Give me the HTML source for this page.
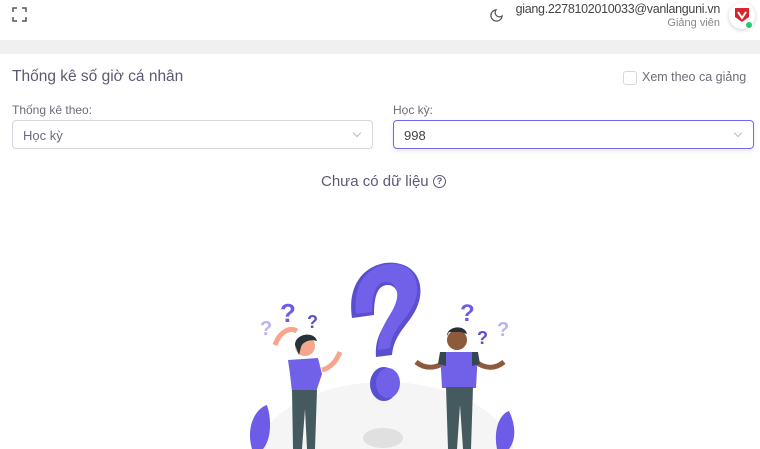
<!DOCTYPE html>
<html style="overflow:hidden;height:449px"><head><meta charset="utf-8"><style>
*{box-sizing:border-box;margin:0;padding:0}
body{width:760px;height:449px;overflow:hidden;background:#fff;font-family:"Liberation Sans",sans-serif;color:#5e5873;position:relative}
.hdr{position:absolute;left:0;top:0;width:760px;height:40px;background:#fff;box-shadow:0 2px 6px rgba(0,0,0,.06)}
.band{position:absolute;left:0;top:40px;width:760px;height:14px;background:#f0f0f0}
.abs{position:absolute;white-space:nowrap}
.sel{position:absolute;height:29px;border:1px solid #d8d6de;border-radius:4px;font-size:13px;color:#6e6b7b;padding:7px 10px}
.sel .ch{position:absolute;right:12px;top:9px;width:6px;height:6px;border-right:1px solid #bbb;border-bottom:1px solid #bbb;transform:rotate(45deg)}
</style></head><body>
<div class="hdr"></div>
<div class="band"></div>
<svg class="abs" style="left:12px;top:7px" width="15" height="15" viewBox="0 0 15 15" fill="none" stroke="#555" stroke-width="1.5"><path d="M1 5V1h4M10 1h4v4M14 10v4h-4M5 14H1v-4"/></svg>
<svg class="abs" style="left:489px;top:8px" width="15" height="15" viewBox="0 0 24 24" fill="none" stroke="#555" stroke-width="2"><path d="M21 12.8A9 9 0 1 1 11.2 3a7 7 0 0 0 9.8 9.8z"/></svg>
<div class="abs" style="right:40px;top:2px;font-size:12.5px;letter-spacing:-0.3px;color:#444">giang.2278102010033@vanlanguni.vn</div>
<div class="abs" style="right:40px;top:17px;font-size:11px;color:#888">Giảng viên</div>
<div class="abs" style="left:729px;top:3px;width:26px;height:26px;border-radius:50%;background:#fff;box-shadow:0 1px 4px rgba(0,0,0,.2)"></div>
<svg class="abs" style="left:734px;top:7px" width="16" height="16" viewBox="0 0 16 16"><path d="M1 1h14v9l-7 5-7-5z" fill="#d7262b"/><path d="M4 5l4 6 4-6" stroke="#fff" stroke-width="2" fill="none"/></svg>
<div class="abs" style="left:745px;top:21px;width:8px;height:8px;border-radius:50%;background:#28c76f;border:1px solid #fff"></div>

<div class="abs" style="left:12px;top:68px;font-size:15.5px;color:#5e5873">Thống kê số giờ cá nhân</div>
<div class="abs" style="left:623px;top:71px;width:14px;height:14px;border:1px solid #d8d6de;border-radius:3px"></div>
<div class="abs" style="left:642px;top:70px;font-size:12.5px;color:#6e6b7b">Xem theo ca giảng</div>
<div class="abs" style="left:12px;top:103px;font-size:12px;color:#6e6b7b">Thống kê theo:</div>
<div class="abs" style="left:393px;top:103px;font-size:12px;color:#6e6b7b">Học kỳ:</div>
<div class="sel" style="left:12px;top:120px;width:361px">Học kỳ<span class="ch"></span></div>
<div class="sel" style="left:393px;top:120px;width:361px;border-color:#7367f0;color:#444;box-shadow:0 2px 4px rgba(115,103,240,.15)">998<span class="ch"></span></div>
<div class="abs" style="left:321px;top:173px;font-size:15px;color:#5e5873">Chưa có dữ liệu</div>
<div class="abs" style="left:433px;top:175px;width:13px;height:13px;border:1.3px solid #5e5873;border-radius:50%;font-size:9px;text-align:center;line-height:11px;font-weight:bold">?</div>

<svg class="abs" style="left:0;top:0" width="760" height="449">
<ellipse cx="385" cy="460" rx="130" ry="78" fill="#f5f5f5"/>
<ellipse cx="383" cy="438" rx="20" ry="10" fill="#e0e0e0"/>
<path d="M252 449c-6-20 2-40 15-44 5 15 4 35-4 44z" fill="#6c5ce7"/>
<path d="M497 449c-4-20 3-35 12-38 6 12 8 28 0 38z" fill="#6c5ce7"/>
<path d="M352 318c-6-40 20-58 44-55 26 4 30 30 18 50-8 14-20 22-22 42l-16 2c-2-26 14-36 20-50 5-12 0-22-8-22-10 0-14 10-14 30z" fill="#5a4fd0"/>
<path d="M356 314c-4-36 18-52 40-50 22 3 26 26 16 44-8 14-20 22-22 40l-12 2c0-24 14-34 18-48 4-12-2-20-10-20-10 0-14 12-14 30z" fill="#7160e8"/>
<ellipse cx="384" cy="384" rx="14" ry="17" fill="#5a4fd0"/>
<ellipse cx="388" cy="383" rx="12" ry="15" fill="#7160e8"/>
<text x="280" y="322" font-size="26" font-weight="bold" fill="#6c5ce7" font-family="Liberation Sans">?</text>
<text x="307" y="328" font-size="18" font-weight="bold" fill="#5a4fd0" font-family="Liberation Sans">?</text>
<text x="260" y="335" font-size="20" font-weight="bold" fill="#b9b3f5" font-family="Liberation Sans">?</text>
<text x="460" y="321" font-size="24" font-weight="bold" fill="#6c5ce7" font-family="Liberation Sans">?</text>
<text x="477" y="344" font-size="18" font-weight="bold" fill="#5a4fd0" font-family="Liberation Sans">?</text>
<text x="497" y="336" font-size="20" font-weight="bold" fill="#b9b3f5" font-family="Liberation Sans">?</text>
<path d="M275 345c5-14 15-18 22-14" stroke="#f5a68d" stroke-width="5" fill="none"/>
<path d="M322 370c8-2 14-8 18-18" stroke="#f5a68d" stroke-width="5" fill="none"/>
<circle cx="305" cy="346" r="10" fill="#f5a68d"/>
<path d="M295 345c0-12 20-14 22-4-6-2-14 0-16 6l-2 8z" fill="#263238"/>
<path d="M288 360l30-2 4 16-6 18h-24l-2-18z" fill="#7160e8"/>
<path d="M292 390h25l-2 59h-8l-2-40-3 40h-9z" fill="#455a5e"/>
<path d="M446 362c-10 6-20 8-30 0" stroke="#8d5a3b" stroke-width="5" fill="none"/>
<path d="M476 362c8 6 18 8 28 0" stroke="#8d5a3b" stroke-width="5" fill="none"/>
<circle cx="457" cy="340" r="10" fill="#8d5a3b"/>
<path d="M447 336c0-10 18-12 20-2l-6-2h-12z" fill="#263238"/>
<path d="M440 352h38l-2 36h-34z" fill="#7160e8"/>
<path d="M440 352l6 0 0 14-8-2z M478 352l-6 0 0 14 8-2z" fill="#37474f"/>
<path d="M446 387h27l-2 62h-8l-3-44-3 44h-9z" fill="#455a5e"/>
</svg>
</body></html>
